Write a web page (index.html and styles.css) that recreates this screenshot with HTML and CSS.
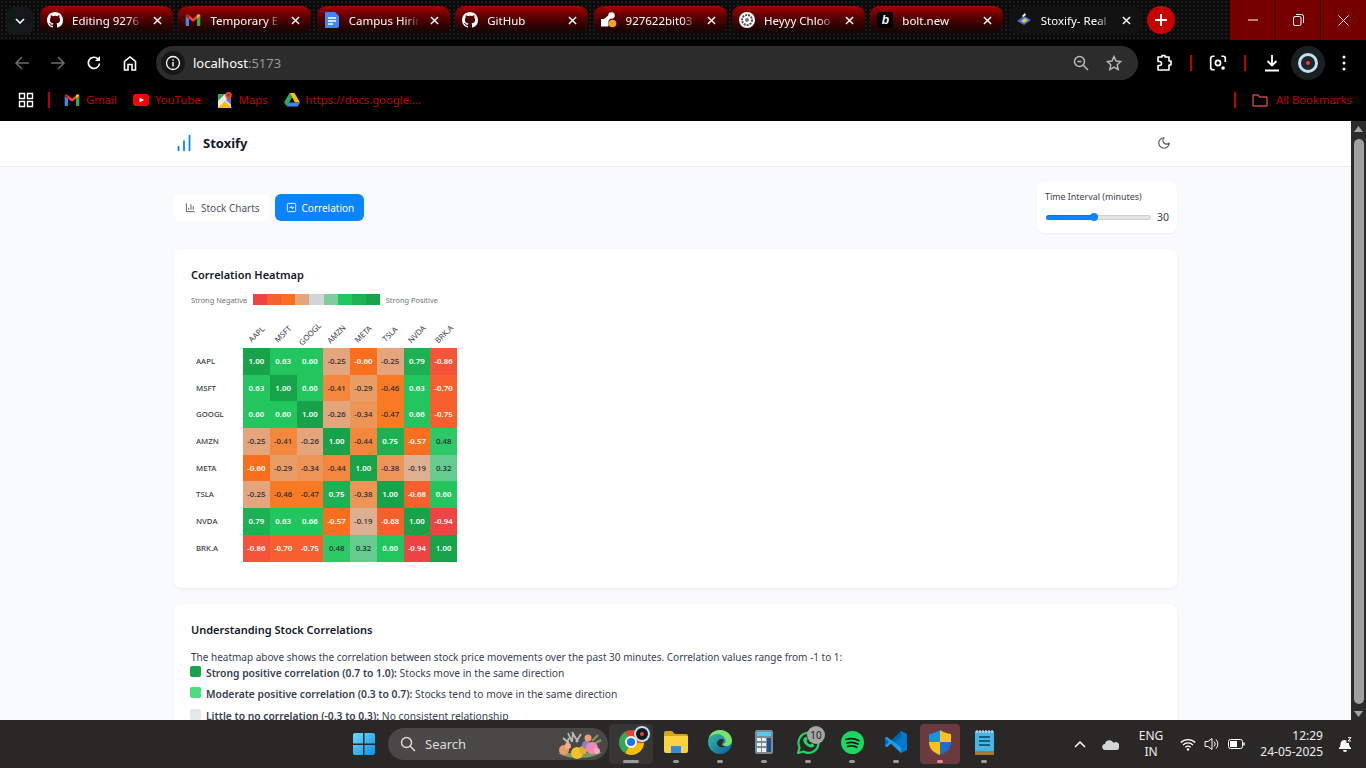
FILE: index.html
```html
<!doctype html>
<html lang="en">
<head>
    <meta charset="UTF-8">
    <title>Stoxify- Real Time Stock Analytics</title>
    <link rel="stylesheet" href="styles.css">
</head>
<body>
<svg class="defs" width="0" height="0">
    <symbol id="github" viewBox="0 0 16 16"><path fill="#fff" d="M8 0C3.58 0 0 3.58 0 8c0 3.54 2.29 6.53 5.47 7.59.4.07.55-.17.55-.38 0-.19-.01-.82-.01-1.49-2.01.37-2.53-.49-2.69-.94-.09-.23-.48-.94-.82-1.13-.28-.15-.68-.52-.01-.53.63-.01 1.08.58 1.23.82.72 1.21 1.87.87 2.33.66.07-.52.28-.87.51-1.07-1.78-.2-3.64-.89-3.64-3.95 0-.87.31-1.59.82-2.15-.08-.2-.36-1.02.08-2.12 0 0 .67-.21 2.2.82.64-.18 1.32-.27 2-.27.68 0 1.36.09 2 .27 1.53-1.04 2.2-.82 2.2-.82.44 1.1.16 1.92.08 2.12.51.56.82 1.27.82 2.15 0 3.07-1.87 3.75-3.65 3.95.29.25.54.73.54 1.48 0 1.07-.01 1.93-.01 2.2 0 .21.15.46.55.38A8.013 8.013 0 0016 8c0-4.42-3.58-8-8-8z"/></symbol>
    <symbol id="gmail" viewBox="0 0 24 24">
        <path fill="#4285f4" d="M1 6v13.5A1.5 1.5 0 0 0 2.5 21H6V10z"/>
        <path fill="#34a853" d="M23 6v13.5a1.5 1.5 0 0 1-1.5 1.5H18V10z"/>
        <path fill="#ea4335" d="M6 10v-5l6 4.7L18 5v5l-6 4.6z"/>
        <path fill="#c5221f" d="M1 6c0-2.3 2.6-3.500 4.3-2.200L6 4.400V10L1 6z"/>
        <path fill="#fbbc04" d="M23 6c0-2.3-2.6-3.500-4.300-2.200l-.7.6V10l5-4z"/>
    </symbol>
    <symbol id="close" viewBox="0 0 10 10"><path d="M1 1l8 8M9 1l-8 8" stroke="#fff" stroke-width="1.6"/></symbol>
</svg>

<div class="tabstrip">
    <div class="tab-search"><svg width="10" height="6" viewBox="0 0 10 6"><path d="M1 1l4 4 4-4" fill="none" stroke="#fff" stroke-width="1.6"/></svg></div>
    <div class="tab">
        <svg class="favicon"><use href="#github"/></svg>
        <span class="tab-title">Editing 9276</span>
        <svg class="tab-close"><use href="#close"/></svg>
    </div>
    <div class="tab">
        <svg class="favicon"><use href="#gmail"/></svg>
        <span class="tab-title">Temporary E</span>
        <svg class="tab-close"><use href="#close"/></svg>
    </div>
    <div class="tab">
        <svg class="favicon" viewBox="0 0 16 16"><path fill="#4285f4" d="M2 0h9l4 4v10a2 2 0 0 1-2 2H2a1 1 0 0 1-1-1V1a1 1 0 0 1 1-1z"/><path d="M4 6h8M4 9h8M4 12h5" stroke="#fff" stroke-width="1.5"/></svg>
        <span class="tab-title">Campus Hirin</span>
        <svg class="tab-close"><use href="#close"/></svg>
    </div>
    <div class="tab">
        <svg class="favicon"><use href="#github"/></svg>
        <span class="tab-title">GitHub</span>
        <svg class="tab-close"><use href="#close"/></svg>
    </div>
    <div class="tab">
        <svg class="favicon" viewBox="0 0 16 16"><circle cx="10.500" cy="3.500" r="3.200" fill="#fff"/><path d="M8 3L3 7l3 3 5-5z" fill="#fff"/><rect x="0" y="7" width="7.500" height="7.500" fill="#fff"/><circle cx="11.500" cy="11.500" r="3.800" fill="#f5a623"/></svg>
        <span class="tab-title">927622bit03</span>
        <svg class="tab-close"><use href="#close"/></svg>
    </div>
    <div class="tab">
        <svg class="favicon" viewBox="0 0 16 16"><circle cx="8" cy="8" r="8" fill="#fff"/><circle cx="8" cy="8" r="5" fill="none" stroke="#555" stroke-width="2" stroke-dasharray="2 1"/><circle cx="8" cy="8" r="2" fill="#777"/></svg>
        <span class="tab-title">Heyyy Chloo</span>
        <svg class="tab-close"><use href="#close"/></svg>
    </div>
    <div class="tab">
        <span class="favicon favicon-bolt">b</span>
        <span class="tab-title">bolt.new</span>
        <svg class="tab-close"><use href="#close"/></svg>
    </div>
    <div class="tab tab-active">
        <svg class="favicon" viewBox="0 0 16 16"><path fill="#3f6fd8" d="M1 9l7-5 7 4-7 5z"/><path fill="#f2c230" d="M5 9l4-3 3 2-4 3z"/><path fill="#fff" d="M6 4l3-3 1 2-3 2z"/></svg>
        <span class="tab-title">Stoxify- Real</span>
        <svg class="tab-close"><use href="#close"/></svg>
    </div>
    <div class="new-tab"><svg width="12" height="12" viewBox="0 0 12 12"><path d="M6 0v12M0 6h12" stroke="#fff" stroke-width="2"/></svg></div>
    <div class="win-controls">
        <div class="win-btn"><svg width="10" height="10" viewBox="0 0 10 10"><path d="M0 5h10" stroke="#fff"/></svg></div>
        <div class="win-btn"><svg width="11" height="12" viewBox="0 0 11 12"><rect x=".5" y="2.5" width="7.5" height="9" rx="1.5" fill="none" stroke="#fff"/><path d="M3 .5h5.5a2 2 0 0 1 2 2V9" fill="none" stroke="#fff"/></svg></div>
        <div class="win-btn"><svg width="11" height="11" viewBox="0 0 11 11"><path d="M.5.5l10 10M10.500.5l-10 10" stroke="#fff"/></svg></div>
    </div>
</div>

<div class="toolbar">
    <div class="tool-btn"><svg width="16" height="16" viewBox="0 0 16 16"><path d="M15 8H2M8 2L2 8l6 6" fill="none" stroke="#6b6b6b" stroke-width="1.5"/></svg></div>
    <div class="tool-btn"><svg width="16" height="16" viewBox="0 0 16 16"><path d="M1 8h13M8 2l6 6-6 6" fill="none" stroke="#6b6b6b" stroke-width="1.5"/></svg></div>
    <div class="tool-btn"><svg width="16" height="16" viewBox="0 0 16 16"><path d="M13.500 8.500A5.600 5.600 0 1 1 12 4" fill="none" stroke="#fff" stroke-width="1.700"/><path d="M14 1v5H9z" fill="#fff"/></svg></div>
    <div class="tool-btn"><svg width="16" height="16" viewBox="0 0 16 16"><path d="M2.500 15V6.500L8 2l5.500 4.500V15H10V9.500H6V15z" fill="none" stroke="#fff" stroke-width="1.600"/></svg></div>
    <div class="address">
        <div class="addr-info"><svg width="16" height="16" viewBox="0 0 16 16"><circle cx="8" cy="8" r="6.500" fill="none" stroke="#fff" stroke-width="1.300"/><path d="M8 7v4.500M8 4.300v1.500" stroke="#fff" stroke-width="1.400"/></svg></div>
        <span class="addr-host">localhost</span><span class="addr-port">:5173</span>
        <svg class="addr-zoom" width="16" height="16" viewBox="0 0 16 16"><circle cx="6.500" cy="6.500" r="5" fill="none" stroke="#bbb" stroke-width="1.500"/><path d="M10 10l5 5M4.500 6.500h4" stroke="#bbb" stroke-width="1.500"/></svg>
        <svg class="addr-star" width="16" height="16" viewBox="0 0 16 16"><path d="M8 1.500l2 4.500 4.800.5-3.600 3.200 1 4.800L8 12.100l-4.200 2.400 1-4.800L1.200 6.500 6 6z" fill="none" stroke="#bbb" stroke-width="1.400"/></svg>
    </div>
    <div class="tool-btn tool-first"><svg width="18" height="18" viewBox="0 0 18 18"><path d="M3 3h4V1.500h3V3h4v4h2v4h-2v5H3v-4.500h1.500a2 2 0 0 0 0-4H3z" fill="none" stroke="#fff" stroke-width="1.600" stroke-linejoin="round"/></svg></div>
    <div class="tool-sep"></div>
    <div class="tool-btn"><svg width="18" height="18" viewBox="0 0 16 16"><path d="M5 2H3.500A2 2 0 0 0 1.500 4v8a2 2 0 0 0 2 2H5M11 2h1.500a2 2 0 0 1 2 2v3" fill="none" stroke="#fff" stroke-width="1.500"/><circle cx="8" cy="8" r="2.300" fill="none" stroke="#fff" stroke-width="1.500"/><circle cx="12.500" cy="12.500" r="1.600" fill="#fff"/></svg></div>
    <div class="tool-sep"></div>
    <div class="tool-btn"><svg width="16" height="18" viewBox="0 0 16 18"><path d="M8 1v10M3.500 7L8 11.500 12.500 7M1 16.500h14" fill="none" stroke="#fff" stroke-width="1.800"/></svg></div>
    <div class="tool-btn"><span class="profile-ring"><span class="profile"><span class="profile-dot"></span></span></span></div>
    <div class="tool-btn"><svg width="4" height="16" viewBox="0 0 4 16"><circle cx="2" cy="2" r="1.500" fill="#fff"/><circle cx="2" cy="8" r="1.500" fill="#fff"/><circle cx="2" cy="14" r="1.500" fill="#fff"/></svg></div>
</div>

<div class="bookmarks">
    <svg class="apps-icon" width="16" height="16" viewBox="0 0 16 16"><path d="M1.500 1.500h5v5h-5zM9.500 1.500h5v5h-5zM1.500 9.500h5v5h-5zM9.500 9.500h5v5h-5z" fill="none" stroke="#fff" stroke-width="1.400"/></svg>
    <div class="bm-sep"></div>
    <div class="bm bm-first"><svg class="bm-icon"><use href="#gmail"/></svg>Gmail</div>
    <div class="bm"><svg class="bm-icon" viewBox="0 0 16 16"><rect y="2" width="16" height="12" rx="3" fill="#f00"/><path d="M6.500 5.500v5L11 8z" fill="#fff"/></svg>YouTube</div>
    <div class="bm"><svg class="bm-icon" viewBox="0 0 16 16"><path fill="#e8e8e8" d="M1 2h13v14H1z"/><path fill="#34a853" d="M1 2h7L1 9z"/><path fill="#fbbc04" d="M1 16l7-7 7 7z"/><path fill="#4285f4" d="M9 8l5 5V2z"/><path fill="#ea4335" d="M11.500 0a3.300 3.300 0 0 0-3.300 3.300c0 2.300 3.300 5.200 3.300 5.200s3.300-2.900 3.300-5.200A3.300 3.300 0 0 0 11.500 0z"/><circle cx="11.500" cy="3.300" r="1.100" fill="#8c1d18"/></svg>Maps</div>
    <div class="bm"><svg class="bm-icon" viewBox="0 0 16 16"><path fill="#fbbc04" d="M5.500 1h5l5.500 9.500h-5z"/><path fill="#34a853" d="M5.500 1L8 5.500 3 14.500 0 10.500z"/><path fill="#4285f4" d="M5 10.500h11L13.500 14.500H3z"/></svg>https://docs.google....</div>
    <div class="bm-sep bm-right"></div>
    <div class="bm bm-all"><svg class="bm-icon" viewBox="0 0 16 16"><path d="M1 3h5l1.500 2H15v9H1z" fill="none" stroke="#c04545" stroke-width="1.400" stroke-linejoin="round"/></svg>All Bookmarks</div>
</div>

<div class="viewport">
    <div class="page">
        <header class="app-header">
            <div class="app-header-inner">
                <div class="brand">
                    <svg width="22" height="22" viewBox="0 0 24 24" fill="none" stroke="#0a84ff" stroke-width="2" stroke-linecap="round"><path d="M12 20V10M18 20V4M6 20v-4"/></svg>
                    <span>Stoxify</span>
                </div>
                <svg class="moon" width="14" height="14" viewBox="0 0 24 24" fill="none" stroke="#4b5563" stroke-width="2" stroke-linecap="round" stroke-linejoin="round"><path d="M12 3a6 6 0 0 0 9 9 9 9 0 1 1-9-9Z"/></svg>
            </div>
        </header>

        <main class="main">
            <div class="controls">
                <div class="view-tabs">
                    <button class="view-tab">
                        <svg width="11" height="11" viewBox="0 0 24 24" fill="none" stroke="currentColor" stroke-width="2"><path d="M3 3v18h18M8 17v-4M13 17V5M18 17V9"/></svg>
                        Stock Charts
                    </button>
                    <button class="view-tab view-tab-on">
                        <svg width="11" height="11" viewBox="0 0 24 24" fill="none" stroke="currentColor" stroke-width="2"><rect x="3" y="3" width="18" height="18" rx="2"/><path d="M8 12h3l1-3 2 6 1-3h2"/></svg>
                        Correlation
                    </button>
                </div>
                <div class="interval">
                    <label class="interval-label" for="interval">Time Interval (minutes)</label>
                    <div class="interval-row">
                        <input id="interval" class="interval-input" type="range" min="5" max="60" step="5" value="30">
                        <span class="interval-value">30</span>
                    </div>
                </div>
            </div>

            <section class="card card-heatmap">
                <h2 class="card-title">Correlation Heatmap</h2>
                <div class="legend">
                    <span>Strong Negative</span>
                    <div class="legend-bar">
                        <i class="n94"></i><i class="n75"></i><i class="n50"></i><i class="n25"></i><i class="zero"></i><i class="p30"></i><i class="p60"></i><i class="p75"></i><i class="p100"></i>
                    </div>
                    <span>Strong Positive</span>
                </div>
                <div class="heatmap">
                    <div></div>
                    <div class="col-label"><span>AAPL</span></div>
                    <div class="col-label"><span>MSFT</span></div>
                    <div class="col-label"><span>GOOGL</span></div>
                    <div class="col-label"><span>AMZN</span></div>
                    <div class="col-label"><span>META</span></div>
                    <div class="col-label"><span>TSLA</span></div>
                    <div class="col-label"><span>NVDA</span></div>
                    <div class="col-label"><span>BRK.A</span></div>

                    <div class="row-label">AAPL</div>
                    <div class="cell p100">1.00</div><div class="cell p60">0.63</div><div class="cell p60">0.60</div><div class="cell n25 dark">-0.25</div><div class="cell n50">-0.60</div><div class="cell n25 dark">-0.25</div><div class="cell p75">0.79</div><div class="cell n86">-0.86</div>

                    <div class="row-label">MSFT</div>
                    <div class="cell p60">0.63</div><div class="cell p100">1.00</div><div class="cell p60">0.60</div><div class="cell n41 dark">-0.41</div><div class="cell n29 dark">-0.29</div><div class="cell n46 dark">-0.46</div><div class="cell p60">0.63</div><div class="cell n75">-0.70</div>

                    <div class="row-label">GOOGL</div>
                    <div class="cell p60">0.60</div><div class="cell p60">0.60</div><div class="cell p100">1.00</div><div class="cell n25 dark">-0.26</div><div class="cell n34 dark">-0.34</div><div class="cell n46 dark">-0.47</div><div class="cell p60">0.66</div><div class="cell n75">-0.75</div>

                    <div class="row-label">AMZN</div>
                    <div class="cell n25 dark">-0.25</div><div class="cell n41 dark">-0.41</div><div class="cell n25 dark">-0.26</div><div class="cell p100">1.00</div><div class="cell n41 dark">-0.44</div><div class="cell p75">0.75</div><div class="cell n50">-0.57</div><div class="cell p48 dark">0.48</div>

                    <div class="row-label">META</div>
                    <div class="cell n50">-0.60</div><div class="cell n29 dark">-0.29</div><div class="cell n34 dark">-0.34</div><div class="cell n41 dark">-0.44</div><div class="cell p100">1.00</div><div class="cell n34 dark">-0.38</div><div class="cell n19 dark">-0.19</div><div class="cell p25 dark">0.32</div>

                    <div class="row-label">TSLA</div>
                    <div class="cell n25 dark">-0.25</div><div class="cell n46 dark">-0.46</div><div class="cell n46 dark">-0.47</div><div class="cell p75">0.75</div><div class="cell n34 dark">-0.38</div><div class="cell p100">1.00</div><div class="cell n75">-0.68</div><div class="cell p60">0.60</div>

                    <div class="row-label">NVDA</div>
                    <div class="cell p75">0.79</div><div class="cell p60">0.63</div><div class="cell p60">0.66</div><div class="cell n50">-0.57</div><div class="cell n19 dark">-0.19</div><div class="cell n75">-0.68</div><div class="cell p100">1.00</div><div class="cell n94">-0.94</div>

                    <div class="row-label">BRK.A</div>
                    <div class="cell n86">-0.86</div><div class="cell n75">-0.70</div><div class="cell n75">-0.75</div><div class="cell p48 dark">0.48</div><div class="cell p25 dark">0.32</div><div class="cell p60">0.60</div><div class="cell n94">-0.94</div><div class="cell p100">1.00</div>
                </div>
            </section>

            <section class="card card-help">
                <h2 class="card-title">Understanding Stock Correlations</h2>
                <p class="help-intro">The heatmap above shows the correlation between stock price movements over the past 30 minutes. Correlation values range from -1 to 1:</p>
                <ul class="help-list">
                    <li><i class="swatch p100"></i><span><b>Strong positive correlation (0.7 to 1.0):</b> Stocks move in the same direction</span></li>
                    <li><i class="swatch moderate"></i><span><b>Moderate positive correlation (0.3 to 0.7):</b> Stocks tend to move in the same direction</span></li>
                    <li><i class="swatch none"></i><span><b>Little to no correlation (-0.3 to 0.3):</b> No consistent relationship</span></li>
                </ul>
            </section>
        </main>
    </div>
    <div class="scrollbar">
        <svg width="9" height="6" viewBox="0 0 9 6"><path d="M4.500 0L9 6H0z" fill="#a3a3a3"/></svg>
        <div class="scroll-thumb"></div>
        <svg width="9" height="6" viewBox="0 0 9 6"><path d="M4.500 6L9 0H0z" fill="#a3a3a3"/></svg>
    </div>
</div>

<footer class="taskbar">
    <div class="start">
        <svg width="24" height="24" viewBox="0 0 24 24"><defs><linearGradient id="win" x1="0" y1="0" x2="1" y2="1"><stop offset="0" stop-color="#6fdcff"/><stop offset="1" stop-color="#0a8fe8"/></linearGradient></defs><path fill="url(#win)" d="M1 3a2 2 0 0 1 2-2h8v10.500H1zM12.500 1H21a2 2 0 0 1 2 2v8.500H12.500zM1 13h10v10H3a2 2 0 0 1-2-2zM12.500 13H23v8a2 2 0 0 1-2 2h-8.500z"/></svg>
    </div>
    <div class="search">
        <svg width="16" height="16" viewBox="0 0 16 16"><circle cx="6.500" cy="6.500" r="5" fill="none" stroke="#ddd" stroke-width="1.400"/><path d="M10 10l5 5" stroke="#ddd" stroke-width="1.400"/></svg>
        <span>Search</span>
        <svg class="search-art" width="48" height="30" viewBox="0 0 48 30">
            <path d="M2 24c6 4 14 5 20 5s18-1 24-6l-6 1H8z" fill="#7d9a62"/>
            <path d="M10 16l3-7M13 14l-6-5M16 13l1-9M20 13l5-8M16 13l-4-9M22 13l-6-10" stroke="#b9bdb7" stroke-width="1.800"/>
            <path d="M36 12l6-6M38 15l7-4" stroke="#7d9a62" stroke-width="2.200"/>
            <circle cx="8" cy="21" r="5" fill="#e99a6a"/>
            <circle cx="12" cy="17" r="3" fill="#f2b088"/>
            <circle cx="21" cy="24" r="6" fill="#f2c22e"/>
            <circle cx="27" cy="21" r="4" fill="#e8ad2b"/>
            <circle cx="30" cy="16" r="4" fill="#8d7fd0"/>
            <circle cx="36" cy="19" r="6" fill="#ee8bb5"/>
            <circle cx="32" cy="9" r="3.500" fill="#ef9a72"/>
            <circle cx="41" cy="22" r="3" fill="#f3a9c9"/>
        </svg>
    </div>
    <div class="apps">
        <div class="app app-chrome app-on">
            <span class="chrome"><span class="chrome-core"></span></span>
            <span class="chrome-profile"><span class="profile-dot"></span></span>
            <i class="pip pip-wide"></i>
        </div>
        <div class="app">
            <svg width="24" height="22" viewBox="0 0 24 22"><path fill="#d9a21a" d="M0 2a2 2 0 0 1 2-2h6l3 3h11a2 2 0 0 1 2 2v4H0z"/><path fill="#fcd33f" d="M0 5h24v15a2 2 0 0 1-2 2H2a2 2 0 0 1-2-2z"/><path fill="#2f8fdc" d="M7 15h10v7H7z"/></svg>
            <i class="pip"></i>
        </div>
        <div class="app">
            <svg width="24" height="24" viewBox="0 0 24 24"><defs><linearGradient id="edge" x1="0" y1="0" x2="1" y2="1"><stop offset="0" stop-color="#36c7a0"/><stop offset="1" stop-color="#0c59a4"/></linearGradient></defs><circle cx="12" cy="12" r="12" fill="url(#edge)"/><path fill="#7ee06a" d="M12 0c7 0 12 5 12 11 0 3-3 5-6 5-2 0-3-1-3-2 3-1 3-3 2-5-1-3-4-5-8-5C6 4 2 6 1 8c1-5 6-8 11-8z"/><path fill="#2d2a28" d="M9 14c0-3 2-5 5-5 2 0 2 1.500 1 3-1 1-2 3 0 4 1 .5 2 .5 3 .5-2 1-7 2-9-2.500z"/></svg>
            <i class="pip"></i>
        </div>
        <div class="app">
            <svg width="18" height="24" viewBox="0 0 18 24"><rect width="18" height="24" rx="2" fill="#7d8a94"/><rect x="2" y="2" width="14" height="4" fill="#55c8f0"/><path fill="#e8edf0" d="M2 8h4v3H2zM7 8h4v3H7zM2 13h4v3H2zM7 13h4v3H7zM2 18h4v4H2zM7 18h4v4H7z"/><path fill="#1f4f8f" d="M12 8h4v14h-4z"/></svg>
            <i class="pip"></i>
        </div>
        <div class="app">
            <svg width="25" height="25" viewBox="0 0 25 25"><path d="M2 23l1.600-5.600A10 10 0 1 1 7.500 21.500z" fill="none" stroke="#25d366" stroke-width="2.200" stroke-linejoin="round"/><path fill="#25d366" d="M8.500 7.500c1-1 2-.8 2.400.2l.6 1.500c.2.600-.6 1.300-1 1.800.8 1.700 2 2.800 3.700 3.600.6-.5 1.200-1.300 1.800-1l1.600.8c.9.400.8 1.500-.2 2.400-1.200 1-3 .9-5.300-.4-2.300-1.300-3.800-3-4.600-5-.5-1.500-.1-2.900 1-3.900z"/></svg>
            <span class="badge">10</span>
            <i class="pip"></i>
        </div>
        <div class="app">
            <svg width="23" height="23" viewBox="0 0 23 23"><circle cx="11.500" cy="11.500" r="11.500" fill="#1ed760"/><path d="M5 8.500c4-1.200 9-.9 13 1.200M6 12c3.500-1 7.500-.7 11 1M6.800 15.300c3-.8 6.200-.5 9 .9" fill="none" stroke="#1a1a1a" stroke-width="1.800" stroke-linecap="round"/></svg>
            <i class="pip"></i>
        </div>
        <div class="app">
            <svg width="24" height="24" viewBox="0 0 24 24"><path fill="#0065a9" d="M17 1l6 3v16l-6 3-10-9.500L3 17l-2-1V8l2-1 4 3.500z"/><path fill="#007acc" d="M17 1l6 3v16l-6 3zM17 7l-6.500 5 6.500 5z"/><path fill="#1f9cf0" d="M1 8l2-1 14 10v6L7 13.500 3 17l-2-1 4-4z"/></svg>
            <i class="pip"></i>
        </div>
        <div class="app app-alert">
            <svg width="22" height="25" viewBox="0 0 22 25"><path fill="#1b8fe0" d="M11 0C8 2 4 3.500 0 4v8h11z"/><path fill="#fcc21b" d="M11 0c3 2 7 3.500 11 4v8H11z"/><path fill="#fcc21b" d="M0 12h11v13C5 23 0 19 0 12z"/><path fill="#1b6fd0" d="M22 12H11v13c6-2 11-6 11-13z"/></svg>
            <i class="pip pip-pink"></i>
        </div>
        <div class="app">
            <svg width="19" height="25" viewBox="0 0 19 25"><rect y="1" width="19" height="20" fill="#42b7e8"/><path d="M2 0v3M5 0v3M8 0v3M11 0v3M14 0v3M17 0v3" stroke="#cfeaf6" stroke-width="1.200"/><path d="M4 7h11M4 11h11M4 15h11" stroke="#17607f" stroke-width="1.800"/><rect y="21" width="19" height="4" fill="#a7762f"/></svg>
            <i class="pip"></i>
        </div>
    </div>
    <div class="tray">
        <svg class="tray-chevron" width="12" height="7" viewBox="0 0 12 7"><path d="M1 6l5-5 5 5" fill="none" stroke="#fff" stroke-width="1.500"/></svg>
        <svg class="tray-cloud" width="17" height="11" viewBox="0 0 17 11"><path fill="#d5d5d5" d="M3.500 11a3 3 0 0 1-.5-6 4.500 4.500 0 0 1 8.500-1.300A3.800 3.800 0 0 1 17 8.500 2.500 2.500 0 0 1 14.500 11z"/></svg>
        <div class="tray-lang">ENG<br>IN</div>
        <svg class="tray-wifi" width="16" height="13" viewBox="0 0 16 13"><path d="M.7 4.500a10.500 10.500 0 0 1 14.600 0M3 7a7 7 0 0 1 10 0M5.300 9.300a3.700 3.700 0 0 1 5.400 0" fill="none" stroke="#fff" stroke-width="1.200"/><circle cx="8" cy="11.500" r="1.200" fill="#fff"/></svg>
        <svg class="tray-vol" width="16" height="14" viewBox="0 0 16 14"><path d="M1 4.500h3L8 1.500v11l-4-3H1z" fill="none" stroke="#fff"/><path d="M10 4.500a3.500 3.500 0 0 1 0 5M12 2.500a6.500 6.500 0 0 1 0 9" fill="none" stroke="#fff"/></svg>
        <svg class="tray-battery" width="17" height="10" viewBox="0 0 17 10"><rect x=".5" y=".5" width="14" height="9" rx="2" fill="none" stroke="#fff"/><rect x="2" y="2" width="7" height="6" fill="#fff"/><path d="M16 3.500v3" stroke="#fff" stroke-width="1.500"/></svg>
        <div class="tray-clock">12:29<br>24-05-2025</div>
        <svg class="tray-bell" width="14" height="15" viewBox="0 0 14 15"><path fill="#fff" d="M1 11c1-1 1.500-2 1.500-4a4 4 0 0 1 6-3.500V6H11v1c0 2 1 3 2 4v1H1zM5 13h4a2 2 0 0 1-4 0z"/><path d="M10 .7h3L10 4h3" fill="none" stroke="#fff"/></svg>
    </div>
</footer>
</body>
</html>
```

FILE: styles.css
```css
* {
    box-sizing: border-box;
}
html, body {
    height: 100%;
}
body {
    margin: 0;
    display: flex;
    flex-direction: column;
    overflow: hidden;
    background: #000;
    font-family: "Noto Sans", sans-serif;
}
.defs {
    position: absolute;
}

/* browser tabs */
.tabstrip {
    height: 40px;
    flex: none;
    display: flex;
    align-items: flex-start;
    padding-top: 6px;
    background-color: #0a0a0a;
    background-image: radial-gradient(#1d1d1d 1px, transparent 1px);
    background-size: 4px 4px;
}
.tab-search {
    width: 27px;
    height: 28px;
    margin: 1px 7px 0 6px;
    border-radius: 8px;
    background: #151819;
    display: flex;
    align-items: center;
    justify-content: center;
}
.tab {
    width: 133px;
    height: 28px;
    margin-right: 5.400px;
    padding: 0 11px 0 7px;
    border-radius: 9px;
    display: flex;
    align-items: center;
    background: linear-gradient(#a80000 0%, #5a0000 40%, #1b0505 85%, #140808 100%);
    color: #fff;
    font-size: 11.500px;
}
.tab-active {
    background: #121212;
}
.favicon {
    width: 16px;
    height: 16px;
    flex: none;
    margin-right: 9px;
}
.favicon-bolt {
    background: #000;
    border-radius: 3px;
    font: italic 700 12px/16px "Liberation Sans", sans-serif;
    text-align: center;
    color: #fff;
}
.tab-title {
    flex: 1;
    min-width: 0;
    white-space: nowrap;
    -webkit-mask-image: linear-gradient(90deg, #000 78%, transparent 100%);
    mask-image: linear-gradient(90deg, #000 78%, transparent 100%);
}
.tab-close {
    width: 9px;
    height: 9px;
    flex: none;
    margin-left: 10px;
}
.new-tab {
    width: 28px;
    height: 28px;
    border-radius: 50%;
    background: #c80000;
    display: flex;
    align-items: center;
    justify-content: center;
}
.win-controls {
    margin: -6px 0 0 auto;
    display: flex;
    height: 40px;
}
.win-btn {
    width: 45.600px;
    height: 40px;
    background: #760000;
    border-left: 1px solid #2a0000;
    display: flex;
    align-items: center;
    justify-content: center;
}

/* toolbar */
.toolbar {
    height: 46px;
    flex: none;
    padding: 6px 4px 6px 4px;
    display: flex;
    align-items: center;
    background: #000;
}
.tool-btn {
    width: 36px;
    height: 34px;
    flex: none;
    display: flex;
    align-items: center;
    justify-content: center;
}
.tool-first {
    margin-left: 8px;
}
.tool-sep {
    width: 2px;
    height: 16px;
    margin: 0 8px;
    background: #c00000;
}
.address {
    width: 982px;
    height: 34px;
    margin-left: 8px;
    padding-left: 5px;
    border-radius: 17px;
    background: #2c2c2c;
    display: flex;
    align-items: center;
    font-size: 13px;
}
.addr-info {
    width: 24px;
    height: 24px;
    margin-right: 8px;
    border-radius: 50%;
    background: #171717;
    display: flex;
    align-items: center;
    justify-content: center;
}
.addr-host {
    color: #fff;
}
.addr-port {
    color: #9a9a9a;
}
.addr-zoom {
    margin-left: auto;
}
.addr-star {
    margin: 0 16px 0 17px;
}
.profile-ring {
    width: 34px;
    height: 34px;
    border-radius: 50%;
    background: #1a1f22;
    display: flex;
    align-items: center;
    justify-content: center;
}
.profile {
    width: 20px;
    height: 20px;
    border-radius: 50%;
    background: #20262c;
    border: 3px solid #bfe0f5;
    display: flex;
    align-items: center;
    justify-content: center;
}
.profile-dot {
    width: 4px;
    height: 4px;
    border-radius: 50%;
    background: #e8432f;
}

/* bookmarks */
.bookmarks {
    height: 35px;
    flex: none;
    padding: 0 14px 8px 18px;
    display: flex;
    align-items: center;
    background: #000;
    color: #c00000;
    font-size: 11.300px;
}
.bm-sep {
    width: 2px;
    height: 16px;
    margin-left: 14px;
    background: #c00000;
}
.bm {
    display: flex;
    align-items: center;
    margin-left: 16px;
    white-space: nowrap;
}
.bm-first {
    margin-left: 14px;
}
.bm-icon {
    width: 16px;
    height: 16px;
    margin-right: 6px;
}
.bm-right {
    margin-left: auto;
}
.bm-all .bm-icon {
    margin-right: 8px;
}

/* page area */
.viewport {
    flex: 1;
    min-height: 0;
    display: flex;
}
.page {
    flex: 1;
    min-width: 0;
    overflow: hidden;
    background: #f9fafb;
    color: #111827;
    font-family: "Noto Sans", sans-serif;
}
.scrollbar {
    width: 15px;
    flex: none;
    padding: 5px 0 3px;
    background: #2b2b2b;
    display: flex;
    flex-direction: column;
    align-items: center;
    gap: 7px;
}
.scroll-thumb {
    flex: 1;
    width: 10px;
    border-radius: 5px;
    background: #a0a0a0;
}
.app-header {
    height: 46px;
    background: #fff;
    border-bottom: 1px solid #eceef1;
}
.app-header-inner {
    width: 1003px;
    height: 45px;
    margin: 0 auto;
    padding: 0 6px 1px 0;
    display: flex;
    align-items: center;
    justify-content: space-between;
}
.brand {
    margin-left: -1px;
    display: flex;
    align-items: center;
    gap: 8px;
    font-size: 13px;
    font-weight: 700;
}
.main {
    width: 1003px;
    margin: 0 auto;
    padding-top: 15px;
}
.controls {
    display: flex;
    align-items: center;
    justify-content: space-between;
    margin-bottom: 16px;
}
.view-tabs {
    display: flex;
    gap: 5px;
}
.view-tab {
    height: 27px;
    padding: 0 10px 0 11px;
    border: 0;
    border-radius: 6px;
    background: #fff;
    color: #4b5563;
    display: flex;
    align-items: center;
    gap: 5px;
    font: 10px "Noto Sans", sans-serif;
}
.view-tab-on {
    background: #0a84ff;
    color: #fff;
}
.interval {
    width: 140px;
    height: 51px;
    padding: 8px;
    border-radius: 7px;
    background: #fff;
    box-shadow: 0 1px 2px rgba(0, 0, 0, .06);
}
.interval-label {
    display: block;
    line-height: 14px;
    font-size: 8.900px;
    color: #374151;
}
.interval-row {
    display: flex;
    align-items: center;
    margin-top: 5px;
    height: 16px;
}
.interval-input {
    -webkit-appearance: none;
    appearance: none;
    width: 105px;
    height: 16px;
    margin: 0 6px 0 1px;
    background: none;
}
.interval-input::-webkit-slider-runnable-track {
    height: 5px;
    border-radius: 3px;
    background: linear-gradient(90deg, #0a84ff 46%, #e3e3e3 46%);
    box-shadow: inset 0 0 0 1px rgba(0, 0, 0, .08);
}
.interval-input::-webkit-slider-thumb {
    -webkit-appearance: none;
    width: 8px;
    height: 8px;
    margin-top: -1.500px;
    border-radius: 50%;
    background: #0a84ff;
}
.interval-value {
    font-size: 10.500px;
    color: #374151;
}
.card {
    margin-bottom: 16px;
    padding: 17px;
    border-radius: 7px;
    background: #fff;
    box-shadow: 0 1px 3px rgba(0, 0, 0, .07);
}
.card-heatmap {
    height: 339px;
}
.card-help {
    padding-bottom: 60px;
}
.card-title {
    margin: 0;
    line-height: 18px;
    font-size: 11px;
    font-weight: 600;
}
.legend {
    display: flex;
    align-items: center;
    gap: 5.500px;
    height: 11px;
    margin-top: 10px;
    font-size: 7.400px;
    color: #6b7280;
}
.legend-bar {
    display: flex;
}
.legend-bar i {
    display: block;
    width: 14.200px;
    height: 11px;
}
.heatmap {
    display: grid;
    grid-template-columns: 52px repeat(8, 26.750px);
    grid-template-rows: 28px repeat(8, 26.700px);
    margin-top: 15px;
    font-size: 7.800px;
}
.col-label {
    display: flex;
    align-items: center;
    justify-content: center;
    color: #374151;
}
.col-label span {
    transform: rotate(-45deg);
    white-space: nowrap;
}
.row-label {
    padding: 0 0 1px 5px;
    display: flex;
    align-items: center;
    font-weight: 500;
    color: #374151;
}
.cell {
    padding-bottom: 1px;
    display: flex;
    align-items: center;
    justify-content: center;
    color: #fff;
    font-weight: 600;
}
.cell.dark {
    color: #1f2937;
    font-weight: 500;
}
.p100 { background: #16a34a; }
.p75 { background: #1cb254; }
.p60 { background: #22c55e; }
.p48 { background: #2ec866; }
.p30 { background: #7dce9c; }
.p25 { background: #64cc8e; }
.zero { background: #d1d5db; }
.n19 { background: #deb092; }
.n25 { background: #e4a47c; }
.n29 { background: #e99d66; }
.n34 { background: #ed9557; }
.n41 { background: #f4873b; }
.n46 { background: #f97a24; }
.n50 { background: #f96f1e; }
.n75 { background: #f75f2e; }
.n86 { background: #f5533a; }
.n94 { background: #ef4444; }
.moderate { background: #4ade80; }
.none { background: #e5e7eb; }
.help-intro {
    margin: 10px 0 0;
    line-height: 16px;
    font-size: 10px;
    color: #374151;
}
.help-list {
    margin: 0 0 0 -1px;
    padding: 0;
    list-style: none;
    font-size: 10.300px;
    color: #374151;
}
.help-list li {
    display: flex;
    gap: 5px;
    line-height: 16px;
    margin-bottom: 5.300px;
}
.help-list b {
    font-weight: 600;
}
.swatch {
    width: 11px;
    height: 11px;
    flex: none;
    margin-top: 1px;
    border-radius: 2px;
}

/* windows taskbar */
.taskbar {
    height: 48px;
    flex: none;
    padding-left: 342px;
    display: flex;
    align-items: center;
    background: #2a2826;
    color: #fff;
    font-family: "Noto Sans", sans-serif;
}
.start {
    width: 44px;
    flex: none;
    display: flex;
    justify-content: center;
}
.search {
    width: 220px;
    height: 32px;
    flex: none;
    margin-left: 2px;
    padding: 0 4px 0 12px;
    border-radius: 16px;
    background: #4a4846;
    display: flex;
    align-items: center;
    gap: 9px;
    font-size: 13px;
    color: #ddd;
}
.search-art {
    margin-left: auto;
}
.apps {
    margin-left: 1px;
    flex: none;
    display: flex;
    align-items: center;
}
.app {
    position: relative;
    width: 44px;
    height: 40px;
    flex: none;
    border-radius: 4px;
    display: flex;
    align-items: center;
    justify-content: center;
    padding-bottom: 4px;
}
.app-chrome {
    margin-right: 1px;
}
.app-on {
    background: #383634;
}
.app-alert {
    background: #6b3a3e;
    width: 40px;
    margin: 0 2px;
}
.chrome {
    width: 25px;
    height: 25px;
    border-radius: 50%;
    background: conic-gradient(from -30deg, #ea4335 0deg 120deg, #fbbc04 120deg 240deg, #34a853 240deg 360deg);
    display: flex;
    align-items: center;
    justify-content: center;
}
.chrome-core {
    width: 12px;
    height: 12px;
    border-radius: 50%;
    background: #1a73e8;
    border: 2px solid #fff;
}
.chrome-profile {
    position: absolute;
    top: 2px;
    right: 3px;
    width: 16px;
    height: 16px;
    border-radius: 50%;
    background: #15191d;
    border: 2px solid #bfe0f5;
    display: flex;
    align-items: center;
    justify-content: center;
}
.badge {
    position: absolute;
    top: 2px;
    right: 5px;
    width: 18px;
    height: 18px;
    border-radius: 50%;
    background: #a5a5a5;
    color: #222;
    font-size: 10px;
    line-height: 18px;
    text-align: center;
}
.pip {
    position: absolute;
    bottom: 1px;
    left: 50%;
    width: 6px;
    height: 3px;
    margin-left: -3px;
    border-radius: 2px;
    background: #9a9a9a;
}
.pip-wide {
    width: 16px;
    margin-left: -8px;
}
.pip-pink {
    background: #f08a96;
}
.tray {
    margin-left: 68px;
    flex: none;
    display: flex;
    align-items: center;
    font-size: 11px;
    color: #eee;
}
.tray-cloud {
    margin-left: 16px;
}
.tray-lang {
    width: 40px;
    margin-left: 12px;
    line-height: 16px;
    font-size: 12px;
    text-align: center;
}
.tray-wifi {
    margin-left: 9px;
}
.tray-vol {
    margin-left: 8px;
}
.tray-battery {
    margin-left: 8px;
}
.tray-clock {
    width: 66px;
    margin-left: 12px;
    line-height: 16px;
    font-size: 12px;
    text-align: right;
}
.tray-bell {
    margin-left: 15px;
}
```
